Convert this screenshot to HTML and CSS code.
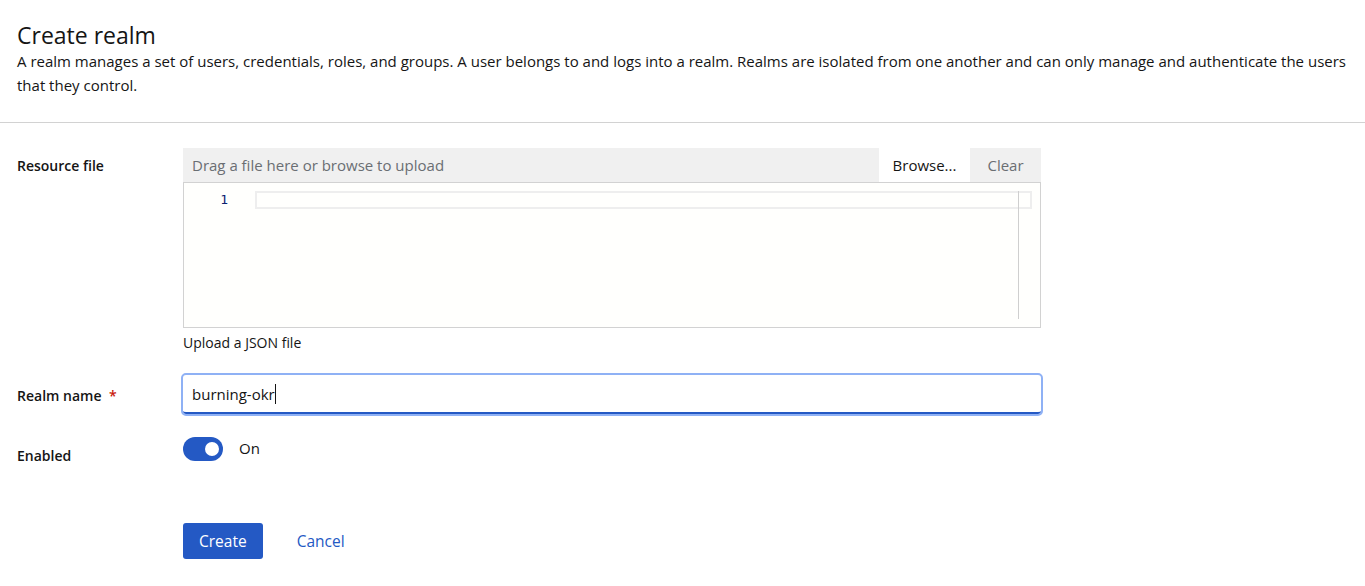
FILE: index.html
```html
<!DOCTYPE html>
<html lang="en">
<head>
<meta charset="utf-8">
<title>Create realm</title>
<link rel="stylesheet" href="styles.css">
</head>
<body>
<section class="page-header">
  <h1 class="title">Create realm</h1>
  <p class="description">A realm manages a set of users, credentials, roles, and groups. A user belongs to and logs into a realm. Realms are isolated from one another and can only manage and authenticate the users that they control.</p>
</section>
<section class="form">
  <div class="form-row">
    <div class="label label-file">Resource file</div>
    <div class="control">
      <div class="file-upload">
        <div class="file-bar">
          <div class="file-name">Drag a file here or browse to upload</div>
          <div class="file-btn browse">Browse...</div>
          <div class="file-btn clear">Clear</div>
        </div>
        <div class="editor">
          <div class="editor-line">
            <div class="gutter">1</div>
            <div class="current-line"></div>
          </div>
          <div class="ruler"></div>
        </div>
      </div>
      <div class="helper">Upload a JSON file</div>
    </div>
  </div>
  <div class="form-row">
    <div class="label label-name">Realm name <span class="required">*</span></div>
    <div class="control">
      <div class="text-input"><span class="value">burning-okr</span><span class="caret"></span></div>
    </div>
  </div>
  <div class="form-row">
    <div class="label label-enabled">Enabled</div>
    <div class="control switch-row">
      <div class="switch"><span class="knob"></span></div>
      <span class="switch-label">On</span>
    </div>
  </div>
  <div class="form-row actions">
    <div></div>
    <div class="control buttons">
      <button class="btn-primary">Create</button>
      <button class="btn-link">Cancel</button>
    </div>
  </div>
</section>
</body>
</html>
```

FILE: styles.css
```css
* { box-sizing: border-box; }
body {
  margin: 0;
  font-family: "Open Sans", "Liberation Sans", sans-serif;
  color: #151515;
  background: #fff;
}
.page-header {
  padding: 22px 17px 25px;
  border-bottom: 1px solid #d2d2d2;
}
.title {
  margin: 0;
  font-size: 23px;
  font-weight: 500;
  line-height: 27px;
}
.description {
  margin: 0;
  font-size: 15px;
  line-height: 24px;
}
.form {
  padding: 25px 17px 0;
}
.form-row {
  display: grid;
  grid-template-columns: 166px 858px;
  margin-bottom: 22px;
}
.label {
  font-size: 14px;
  font-weight: 600;
  line-height: 21px;
}
.label-file { padding-top: 7px; }
.label-name { padding-top: 10px; }
.label-enabled { padding-top: 9px; }
.required { color: #c9190b; margin-left: 4px; }
.file-bar {
  display: flex;
  height: 34px;
  background: #f0f0f0;
  font-size: 15px;
  line-height: 34px;
}
.file-name {
  flex: 1;
  padding-left: 9px;
  color: #6a6e73;
}
.file-btn { text-align: center; }
.browse { width: 91px; background: #fff; color: #151515; }
.clear { width: 71px; color: #6a6e73; }
.editor {
  position: relative;
  height: 146px;
  border: 1px solid #d2d2d2;
  background: #fffffd;
  padding-top: 8px;
}
.editor-line { display: flex; height: 18px; }
.gutter {
  width: 44px;
  text-align: right;
  font-family: "DejaVu Sans Mono", monospace;
  font-size: 13px;
  line-height: 18px;
  color: #0b216f;
}
.current-line {
  margin-left: 27px;
  width: 777px;
  height: 18px;
  border: 2px solid #eeeeee;
}
.ruler {
  position: absolute;
  left: 834px;
  top: 8px;
  width: 1px;
  height: 128px;
  background: #cfcfcf;
}
.helper {
  margin-top: 4px;
  font-size: 14px;
  line-height: 21px;
}
.text-input {
  height: 39px;
  display: flex;
  align-items: center;
  padding-left: 9px;
  padding-top: 1px;
  font-size: 15px;
  border-bottom: 2px solid #2459c4;
  outline: 2px solid #8fb1f5;
  outline-offset: 0;
  border-radius: 3px;
}
.caret {
  display: inline-block;
  width: 1px;
  height: 20px;
  background: #151515;
}
.switch-row {
  display: flex;
  align-items: flex-start;
  padding-top: 1px;
}
.switch {
  position: relative;
  width: 40px;
  height: 24px;
  border-radius: 12px;
  background: #2459c4;
}
.knob {
  position: absolute;
  right: 4px;
  top: 5px;
  width: 14px;
  height: 14px;
  border-radius: 50%;
  background: #fff;
}
.switch-label {
  margin-left: 16px;
  font-size: 15px;
  line-height: 22px;
}
.actions { margin-top: 57px; }
.buttons { display: flex; align-items: center; }
.btn-primary {
  height: 36px;
  padding: 0 16px;
  border: none;
  border-radius: 3px;
  background: #2459c4;
  color: #fff;
  font-family: inherit;
  font-size: 15.5px;
}
.btn-link {
  margin-left: 18px;
  padding: 0 16px;
  border: none;
  background: none;
  color: #2459c4;
  font-family: inherit;
  font-size: 15.5px;
}
```
